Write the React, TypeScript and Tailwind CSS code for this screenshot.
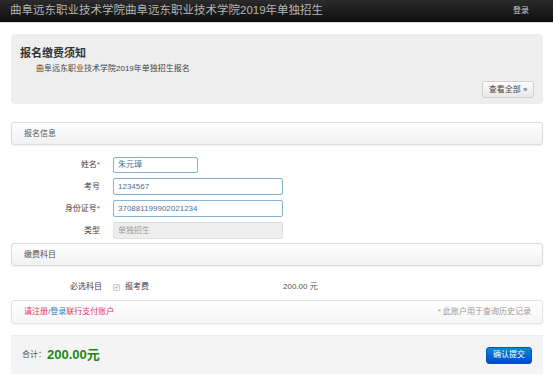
import React from "react";

const font = { fontFamily: '"Liberation Sans", "Noto Sans CJK SC", sans-serif' };

function SectionHeader({ title }: { title: string }) {
  return (
    <div className="h-[23px] flex items-center pl-[12px] rounded-[3px] border border-[#dcdcdc] bg-gradient-to-b from-[#ffffff] to-[#f1f1f1] shadow-[0_1px_2px_rgba(0,0,0,0.06)] text-[8px] text-[#555]">
      {title}
    </div>
  );
}

function Row({
  label,
  required,
  h,
  children,
}: {
  label: string;
  required?: boolean;
  h: string;
  children: React.ReactNode;
}) {
  return (
    <div className={`flex items-center ${h}`}>
      <div className="w-[90px] text-right text-[8px] text-[#444] pr-[1px]">
        {label}
        {required && <span className="text-[#e0303a]">*</span>}
      </div>
      <div className="ml-[12px] flex items-center">{children}</div>
    </div>
  );
}

function Input({
  value,
  cls,
  disabled,
}: {
  value: string;
  cls: string;
  disabled?: boolean;
}) {
  return (
    <div
      className={
        disabled
          ? `${cls} flex items-center pl-[4px] rounded-[2px] border border-[#e0e0e0] bg-[#eeeeee] text-[8px] text-[#999]`
          : `${cls} flex items-center pl-[4px] rounded-[2px] border border-[#86b3d3] bg-white text-[8px] text-[#4a7297]`
      }
    >
      {value}
    </div>
  );
}

export default function App() {
  return (
    <div className="w-[553px] h-[379px] bg-white overflow-hidden" style={font}>
      {/* navbar */}
      <div className="h-[23px] flex items-center justify-between bg-gradient-to-b from-[#2b2b2b] to-[#0e0e0e] border-b border-[#d8d8d8] pl-[10px] pr-[24px]">
        <div className="text-[11.5px] text-[#b4b4b4] leading-none">
          曲阜远东职业技术学院曲阜远东职业技术学院2019年单独招生
        </div>
        <div className="text-[8px] text-[#cfcfcf]">登录</div>
      </div>

      <div className="ml-[11px] mr-[10px]">
        {/* notice */}
        <div className="mt-[11px] h-[70px] rounded-[4px] bg-[#eeeeee] pl-[9px] pr-[9px] pt-[12px] flex flex-col">
          <div className="text-[11px] font-bold text-[#333] leading-[14px]">报名缴费须知</div>
          <div className="text-[8px] text-[#444] pl-[16px] mt-[3px] leading-[12px]">
            曲阜远东职业技术学院2019年单独招生报名
          </div>
          <div className="flex justify-end mt-[6px]">
            <div className="w-[52px] h-[17px] flex items-center justify-center rounded-[3px] border border-[#d0d0d0] bg-gradient-to-b from-[#ffffff] to-[#e8e8e8] text-[8px] text-[#444]">
              查看全部 »
            </div>
          </div>
        </div>

        {/* 报名信息 */}
        <div className="mt-[18px]">
          <SectionHeader title="报名信息" />
        </div>
        <div className="mt-[12px] flex flex-col gap-[5px]">
          <Row label="姓名" required h="h-[16px]">
            <Input value="朱元璋" cls="w-[85px] h-[16px]" />
          </Row>
          <Row label="考号" h="h-[17px]">
            <Input value="1234567" cls="w-[170px] h-[17px]" />
          </Row>
          <Row label="身份证号" required h="h-[17px]">
            <Input value="370881199902021234" cls="w-[170px] h-[17px]" />
          </Row>
          <Row label="类型" h="h-[17px]">
            <Input value="单独招生" cls="w-[170px] h-[17px]" disabled />
          </Row>
        </div>

        {/* 缴费科目 */}
        <div className="mt-[4px]">
          <SectionHeader title="缴费科目" />
        </div>
        <div className="mt-[14px] flex items-center h-[14px]">
          <div className="w-[91px] text-right text-[8px] text-[#444]">必选科目</div>
          <div className="ml-[11px] w-[7px] h-[7px] border border-[#cfcfcf] bg-[#f4f4f4] rounded-[1px] flex items-center justify-center">
            <svg viewBox="0 0 10 10" className="w-[6px] h-[6px]">
              <path d="M2 5.5 L4 7.5 L8 2.5" fill="none" stroke="#888" strokeWidth="1.4" />
            </svg>
          </div>
          <div className="ml-[5px] text-[8px] text-[#444]">报考费</div>
          <div className="ml-[134px] text-[8px] text-[#555]">200.00 元</div>
        </div>

        {/* 请注册 */}
        <div className="mt-[6px] h-[24px] flex items-center justify-between pl-[12px] pr-[11px] rounded-[3px] border border-[#e2e2e2] bg-gradient-to-b from-[#ffffff] to-[#f6f6f6] shadow-[0_1px_2px_rgba(0,0,0,0.05)] text-[8px]">
          <div>
            <span className="text-[#e5336b]">请注册</span>
            <span className="text-[#2a86c9]">/登录</span>
            <span className="text-[#e5336b]">联行支付账户</span>
          </div>
          <div className="text-[#999]">* 此账户用于查询历史记录</div>
        </div>

        {/* total */}
        <div className="mt-[11px] h-[39px] flex items-center justify-between pl-[11px] pr-[11px] bg-[#f4f4f4] border-t border-[#ececec]">
          <div className="flex items-center">
            <span className="text-[8px] text-[#555]">合计：</span>
            <span className="text-[13px] font-bold text-[#178a17] ml-[1px]">200.00元</span>
          </div>
          <div className="w-[46px] h-[17px] flex items-center justify-center rounded-[3px] border border-[#0b4fb8] bg-gradient-to-b from-[#0a8ae0] to-[#0049cc] text-[8px] text-white">
            确认提交
          </div>
        </div>
      </div>
    </div>
  );
}
